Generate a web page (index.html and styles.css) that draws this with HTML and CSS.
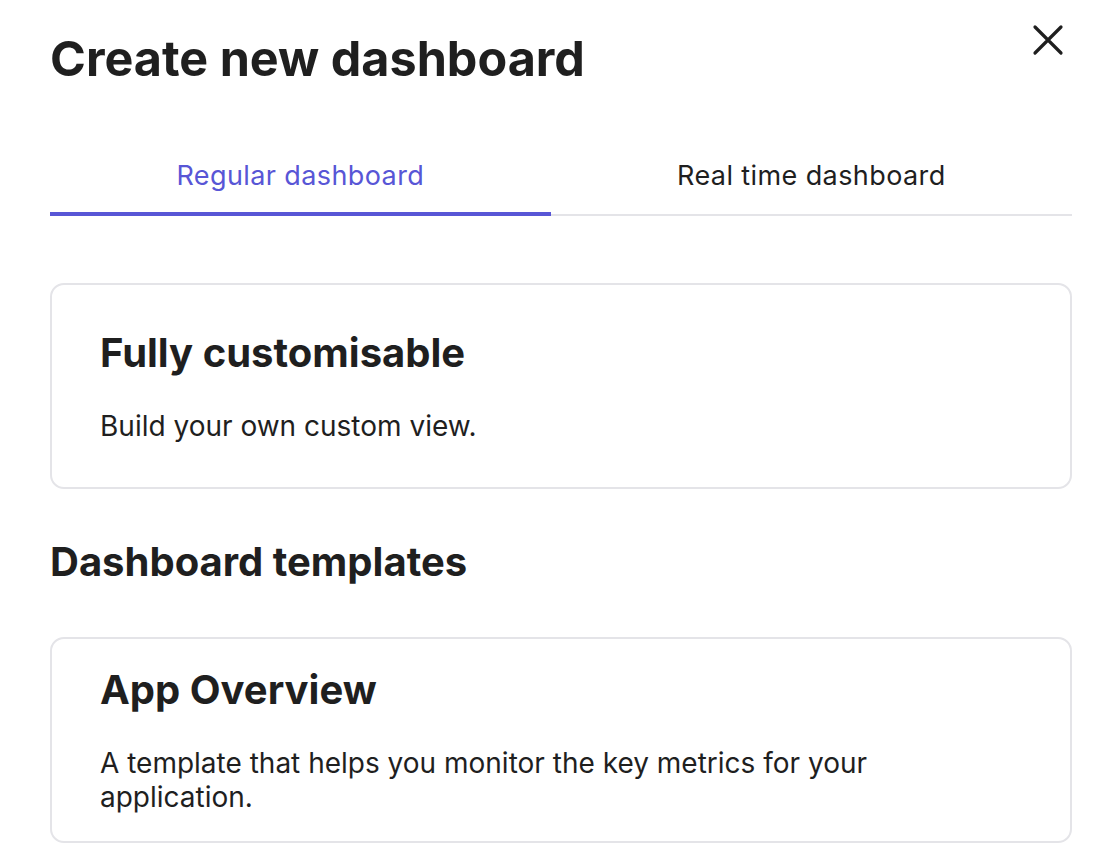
FILE: index.html
```html
<!DOCTYPE html>
<html lang="en">
<head>
    <meta charset="UTF-8">
    <meta name="viewport" content="width=device-width, initial-scale=1.0">
    <title>Create new dashboard</title>
    <link rel="stylesheet" href="styles.css">
</head>
<body>

    <div class="modal">
        <div class="modal-header">
            <h1>Create new dashboard</h1>
            <button class="close-btn" aria-label="Close">
                <svg width="32" height="32" viewBox="0 0 32 32">
                    <path d="M3 3 L29 29 M29 3 L3 29" stroke="#1f1f1f" stroke-width="3.2" stroke-linecap="round" fill="none"/>
                </svg>
            </button>
        </div>

        <div class="tabs">
            <button class="tab active">Regular dashboard</button>
            <button class="tab">Real time dashboard</button>
        </div>

        <div class="card">
            <h3>Fully customisable</h3>
            <p>Build your own custom view.</p>
        </div>

        <h2>Dashboard templates</h2>

        <div class="card">
            <h3>App Overview</h3>
            <p>A template that helps you monitor the key metrics for your application.</p>
        </div>
    </div>

</body>
</html>
```

FILE: styles.css
```css
body {
    font-family: 'Inter', 'Noto Sans', sans-serif;
    margin: 0;
    background: white;
    color: #1f1f1f;
}
.modal {
    padding: 31px 46px 0 50px;
}
.modal-header {
    display: flex;
    justify-content: space-between;
    align-items: flex-start;
}
h1 {
    font-size: 48.5px;
    font-weight: 700;
    margin: 0;
    line-height: 56px;
}
.close-btn {
    background: none;
    border: none;
    padding: 0;
    margin: -7px 8px 0 0;
    cursor: pointer;
    width: 32px;
    height: 32px;
}
.tabs {
    display: flex;
    margin-top: 72px;
    border-bottom: 2px solid #e4e4e8;
}
.tab {
    flex: auto;
    background: none;
    border: none;
    font-family: inherit;
    font-size: 27px;
    letter-spacing: 0.4px;
    line-height: 34px;
    color: #1f1f1f;
    padding: 0 20px 19px;
    margin-bottom: -2px;
    border-bottom: 4px solid transparent;
    cursor: pointer;
}
.tab.active {
    color: #5856d6;
    border-bottom-color: #5856d6;
}
.card {
    display: flex;
    flex-direction: column;
    justify-content: center;
    box-sizing: border-box;
    height: 206px;
    border: 2px solid #e4e4e8;
    border-radius: 14px;
    padding: 0 48px;
    margin-top: 67px;
}
.card h3 {
    font-size: 40px;
    font-weight: 700;
    margin: 0;
    line-height: 48px;
}
.card p {
    font-size: 28px;
    margin: 32px 0 0 0;
    line-height: 34px;
    max-width: 800px;
}
h2 {
    font-size: 40px;
    font-weight: 700;
    margin: 49px 0 0 0;
    line-height: 48px;
}
h2 + .card {
    margin-top: 51px;
}
```
